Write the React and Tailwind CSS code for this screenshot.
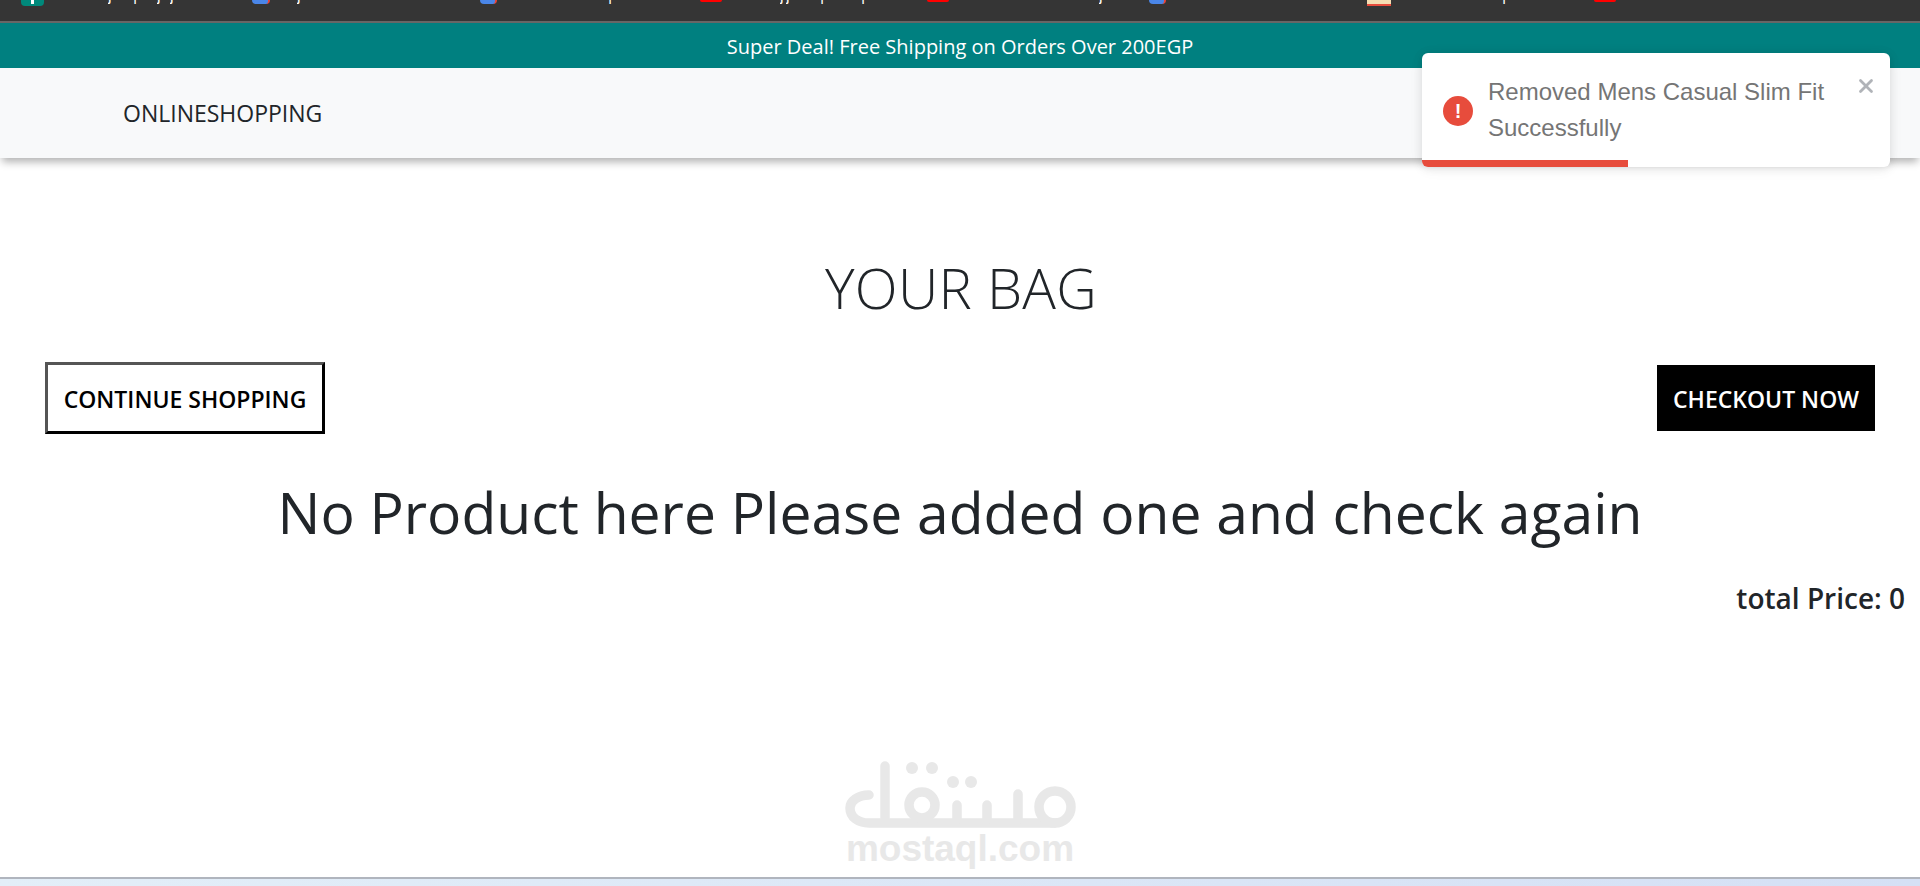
import { X } from 'lucide-react';

// only the descender of a tab title shows above the page
const Tail = ({ gap, char = 'j' }) => (
  <span className={`${gap} h-[6px] w-[6px] overflow-hidden`}>
    <span className="-mt-[14px] block font-['Liberation_Sans',sans-serif] text-[16px] leading-[20px] text-white">{char}</span>
  </span>
);

const Logo = () => (
  <svg width="240" height="80" viewBox="5 0 240 80" fill="none" stroke="#e8e8e8" strokeWidth="9.5" strokeLinecap="round" strokeLinejoin="round">
    <path d="M34 40C23 40 15 46 15 53C15 62 23 68 34 68H220" />
    <path d="M50 11V65" />
    <circle cx="87" cy="50" r="13" />
    <path d="M122 50V65M152 50V65M183 39V65" />
    <circle cx="220" cy="52" r="16" />
    <g fill="#e8e8e8" stroke="none">
      <circle cx="77" cy="13" r="6" />
      <circle cx="97" cy="13" r="6" />
      <circle cx="118" cy="27" r="6" />
      <circle cx="136" cy="27" r="6" />
    </g>
  </svg>
);

const App = () => {
  return (
    <div className="relative h-[886px] overflow-hidden bg-white font-['Open_Sans',sans-serif] text-[#212529]">
      {/* browser bookmarks bar, cut off at the top */}
      <div className="flex h-[23px] border-b-2 border-[#666666] bg-[#353535]">
        <div className="ml-[21px] flex h-[6px] w-[23px] justify-center rounded-b-sm bg-[#00897b]">
          <div className="h-[4px] w-[3px] bg-white" />
        </div>
        <Tail gap="ml-[64px]" />
        <Tail gap="ml-[19px]" char="|" />
        <Tail gap="ml-[18px]" />
        <Tail gap="ml-[7px]" />
        <div className="ml-[76px] h-[4px] w-[18px] rounded-b-sm border-r-2 border-[#ea4335] bg-[#4a86e8]" />
        <Tail gap="ml-[27px]" />
        <div className="ml-[177px] h-[4px] w-[17px] rounded-b-sm border-r-2 border-[#ea4335] bg-[#4a86e8]" />
        <Tail gap="ml-[111px]" char="|" />
        <div className="ml-[86px] h-[2px] w-[22px] rounded-b bg-[#ff0000]" />
        <Tail gap="ml-[58px]" />
        <Tail gap="ml-0" />
        <Tail gap="ml-[28px]" char="|" />
        <Tail gap="ml-[35px]" char="|" />
        <div className="ml-[60px] h-[2px] w-[22px] rounded-b bg-[#ff0000]" />
        <Tail gap="ml-[150px]" />
        <div className="ml-[44px] h-[4px] w-[17px] rounded-b-sm border-r-2 border-[#ea4335] bg-[#4a86e8]" />
        <div className="ml-[201px] h-[6px] w-[24px] border-b-2 border-[#e74c3c] bg-[#f5deb3]" />
        <Tail gap="ml-[111px]" char="|" />
        <div className="ml-[86px] h-[2px] w-[22px] rounded-b bg-[#ff0000]" />
      </div>

      <div className="flex h-[45px] items-center justify-center bg-[#008080] pt-[2px] text-[20px] text-white">
        Super Deal! Free Shipping on Orders Over 200EGP
      </div>

      <nav className="flex h-[90px] items-center bg-[#f8f9fa] pt-[1px] pl-[123px] shadow-[0_6px_8px_-2px_rgba(0,0,0,0.3)]">
        <span className="text-[23px] text-[#212529]">ONLINESHOPPING</span>
      </nav>

      <main>
        <h1 className="mt-[91px] pl-[2px] text-center text-[56px] leading-[76px] font-light tracking-[0.3px]">YOUR BAG</h1>
        <div className="mt-[37px] flex items-center justify-between px-[45px]">
          <button className="h-[72px] w-[280px] border-[3px] border-t-[#555555] border-r-black border-b-black border-l-[#555555] bg-white pt-[2px] text-[23px] font-semibold text-black">
            CONTINUE SHOPPING
          </button>
          <button className="h-[66px] w-[218px] bg-black pt-[2px] text-[23px] font-semibold text-white">
            CHECKOUT NOW
          </button>
        </div>
        <h2 className="mt-[36px] text-center text-[57px] leading-[84px] font-normal">
          No Product here Please added one and check again
        </h2>
        <p className="mt-[26px] pr-[15px] text-right text-[28px] leading-[36px] font-semibold">total Price: 0</p>
      </main>

      {/* toast */}
      <div className="absolute top-[53px] left-[1422px] h-[114px] w-[468px] overflow-hidden rounded-md bg-white shadow-[0_1px_10px_rgba(0,0,0,0.1),0_2px_15px_rgba(0,0,0,0.05)]">
        <div className="flex items-start pt-[21px] pl-[21px]">
          <span className="mt-[22px] flex h-[30px] w-[30px] items-center justify-center rounded-full bg-[#e74c3c] font-['Liberation_Sans',sans-serif] text-[20px] font-bold text-white">!</span>
          <p className="ml-[15px] w-[360px] font-['Liberation_Sans',sans-serif] text-[24px] leading-9 text-[#757575]">
            Removed Mens Casual Slim Fit Successfully
          </p>
          <X className="absolute top-[22px] right-[13px] text-[#b0b3b8]" size={22} strokeWidth={3} />
        </div>
        <div className="absolute bottom-0 left-0 h-[7px] w-[206px] bg-[#e74c3c]" />
      </div>

      {/* watermark */}
      <div className="absolute top-[755px] left-[840px] flex w-[240px] flex-col items-center">
        <Logo />
        <span className="-mt-[5px] font-['Liberation_Sans',sans-serif] text-[37px] leading-[38px] font-bold text-[#e8e8e8]">mostaql.com</span>
      </div>

      {/* taskbar edge */}
      <div className="absolute right-0 bottom-0 left-0 h-[9px] border-t-2 border-[#b0b5be] bg-gradient-to-r from-[#e3eef8] to-[#d5e0f5]" />
    </div>
  );
};

export default App;
